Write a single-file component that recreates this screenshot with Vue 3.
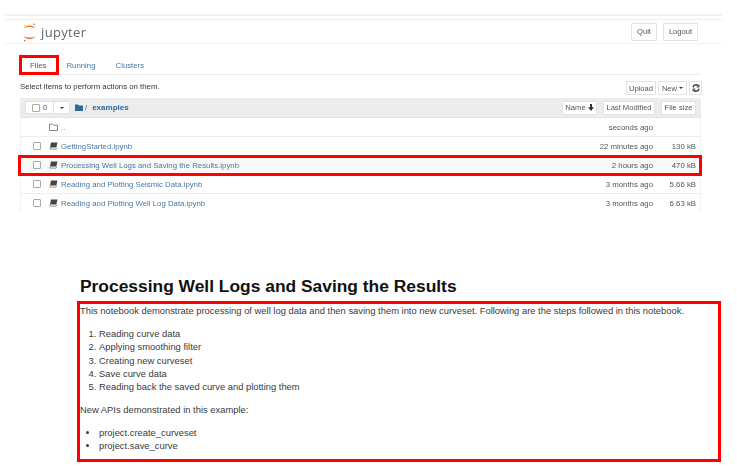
<script setup>
const rows = [
  { name: 'GettingStarted.ipynb', time: '22 minutes ago', size: '130 kB' },
  { name: 'Processing Well Logs and Saving the Results.ipynb', time: '2 hours ago', size: '470 kB', alt: true, marked: true },
  { name: 'Reading and Plotting Seismic Data.ipynb', time: '3 months ago', size: '5.66 kB' },
  { name: 'Reading and Plotting Well Log Data.ipynb', time: '3 months ago', size: '6.63 kB' },
]
const steps = ['Reading curve data', 'Applying smoothing filter', 'Creating new curveset', 'Save curve data', 'Reading back the saved curve and plotting them']
const apis = ['project.create_curveset', 'project.save_curve']
</script>

<template>
  <div class="page">
    <section class="browser">
      <div class="strip"></div>
      <header class="head">
        <div class="logo">
          <svg width="13" height="19" viewBox="0 0 13 19" class="logo-mark">
            <path d="M.5 5.6C2 1.4 11 1.4 12.5 5.6C10.5 3.6 2.5 3.6 .5 5.6Z" fill="#f37726" />
            <path d="M.5 13C2 17.2 11 17.2 12.5 13C10.5 15 2.5 15 .5 13Z" fill="#f37726" />
            <circle cx="11" cy="1.2" r=".8" fill="#767677" />
            <circle cx="1.6" cy="2.2" r=".5" fill="#9e9e9e" />
            <circle cx="1.6" cy="17.6" r=".8" fill="#767677" />
          </svg>
          <span class="wordmark">jupyter</span>
        </div>
        <div class="head-btns">
          <span class="btn quit">Quit</span>
          <span class="btn logout">Logout</span>
        </div>
      </header>

      <nav class="tabs">
        <span class="tab active marked-tab">Files</span>
        <span class="tab">Running</span>
        <span class="tab">Clusters</span>
      </nav>

      <div class="toolbar">
        <span>Select items to perform actions on them.</span>
        <div class="tool-btns">
          <span class="btn upload">Upload</span>
          <span class="btn new">New <i class="caret"></i></span>
          <span class="btn refresh">
            <svg width="8" height="8" viewBox="0 0 8 8" fill="none" stroke="#333" stroke-width="1.3">
              <path d="M1 3.4A3 3 0 0 1 6.4 2M7 4.6A3 3 0 0 1 1.6 6" />
              <path d="M7 .6V3H4.6M1 7.4V5H3.4" stroke-width=".9" />
            </svg>
          </span>
        </div>
      </div>

      <div class="list">
        <div class="list-head">
          <div class="select-group">
            <span class="sel-left"><i class="check"></i><span>0</span></span>
            <span class="sel-right"><i class="caret"></i></span>
          </div>
          <svg class="crumb-folder" width="8" height="7" viewBox="0 0 8 7"><path d="M0 1V.5h3l1 1h4V7H0z" fill="#2c6aa0" /></svg>
          <span class="crumb-sep">/</span>
          <span class="crumb">examples</span>
          <div class="sorts">
            <span class="btn s-name">Name
              <svg class="arrow" width="6" height="7" viewBox="0 0 6 7"><path d="M2 0h2v3.2h2L3 7 0 3.2h2z" fill="#333" /></svg>
            </span>
            <span class="btn s-mod">Last Modified</span>
            <span class="btn s-size">File size</span>
          </div>
        </div>

        <div class="row">
          <span class="cell-check"></span>
          <svg class="ico" width="9" height="8" viewBox="0 0 9 8" fill="none" stroke="#666" stroke-width=".8"><path d="M.5 1.2h3l1 1h4v5.3h-8z" /></svg>
          <span class="name">..</span>
          <span class="time">seconds ago</span>
          <span class="size"></span>
        </div>
        <div v-for="r in rows" :key="r.name" class="row" :class="{ alt: r.alt }">
          <span class="cell-check"><i class="check"></i></span>
          <svg class="ico" width="9" height="8" viewBox="0 0 9 8"><path d="M2 .5h6.4L7.4 5.6H1z" fill="#444" /><path d="M1 5.6v1.5h6.2l.6-1" fill="none" stroke="#666" stroke-width=".7" /></svg>
          <span class="name">{{ r.name }}</span>
          <span class="time">{{ r.time }}</span>
          <span class="size">{{ r.size }}</span>
        </div>
      </div>
    </section>
    <span class="row-mark"></span>
    <span class="tab-mark"></span>

    <section class="notebook">
      <h1>Processing Well Logs and Saving the Results</h1>
      <div class="cell">
        <p>This notebook demonstrate processing of well log data and then saving them into new curveset. Following are the steps followed in this notebook.</p>
        <ol>
          <li v-for="s in steps" :key="s">{{ s }}</li>
        </ol>
        <p>New APIs demonstrated in this example:</p>
        <ul>
          <li v-for="a in apis" :key="a">{{ a }}</li>
        </ul>
      </div>
    </section>
  </div>
</template>

<style>
html, body { margin: 0; background: #fff; }
</style>

<style scoped>
.page {
  position: relative;
  width: 737px;
  height: 469px;
  overflow: hidden;
  background: #fff;
  font-family: "Liberation Sans", Arial, sans-serif;
  color: #333;
}
.browser {
  height: 211px;
  overflow: hidden;
  padding-top: 14px;
  box-sizing: border-box;
  font-size: 7.8px;
  filter: blur(.3px);
}
.strip {
  margin-left: 5px;
  width: 717px;
  height: 2px;
  background: #f3f3f3;
  border-bottom: 1px solid #fff;
}
.head {
  margin: 2px 0 0 5px;
  width: 717px;
  height: 25px;
  box-sizing: border-box;
  border-top: 1px solid #eee;
  border-bottom: 1px solid #f3f3f3;
  display: flex;
  align-items: center;
  justify-content: space-between;
  padding: 0 24px 0 18px;
}
.logo { display: flex; align-items: center; gap: 5px; }
.logo-mark { display: block; margin-top: 1px; }
.wordmark {
  font-family: "Open Sans", sans-serif;
  font-size: 13px;
  letter-spacing: .35px;
  color: #666;
  line-height: 16px;
}
.head-btns { display: flex; gap: 6px; align-items: center; }
.btn {
  display: inline-flex;
  align-items: center;
  justify-content: center;
  gap: 2px;
  box-sizing: border-box;
  height: 14px;
  background: #fff;
  border: 1px solid #e2e2e2;
  border-radius: 1px;
  color: #555;
  font-size: 7.6px;
  white-space: nowrap;
}
.head-btns .btn { height: 18px; }
.quit { width: 26px; }
.logout { width: 35px; }

.tabs {
  margin: 12px 36px 0 20px;
  height: 18px;
  border-bottom: 1px solid #eee;
  display: flex;
}
.tab {
  color: #4a77a6;
  line-height: 20px;
  margin-left: 20px;
}
.tab.active { color: #555; margin-left: 10px; }

.tab-mark {
  position: absolute;
  left: 19px;
  top: 55px;
  width: 40px;
  height: 20px;
  box-sizing: border-box;
  border: 3px solid #f00;
}

.toolbar {
  margin: 0 35px 0 20px;
  height: 23px;
  display: flex;
  align-items: center;
  justify-content: space-between;
}
.toolbar > span { color: #333; }
.tool-btns { display: flex; gap: 2px; margin-top: 3px; }
.upload { width: 30px; }
.new { width: 29px; }
.refresh { width: 13px; }
.caret {
  display: inline-block;
  width: 0;
  height: 0;
  border: 2px solid transparent;
  border-top: 2.5px solid #333;
  border-bottom: 0;
}

.list { margin: 0 36px 0 20px; border-left: 1px solid #f2f2f2; border-right: 1px solid #f2f2f2; }
.list-head {
  height: 19.5px;
  margin-left: -1px;
  margin-right: -1px;
  background: #ececec;
  border-bottom: 1px solid #e4e4e4;
  box-sizing: border-box;
  display: flex;
  align-items: center;
  padding: 0 5px;
}
.select-group { display: flex; height: 13px; margin-top: 1px; }
.sel-left, .sel-right {
  display: flex;
  align-items: center;
  justify-content: center;
  box-sizing: border-box;
  background: #fff;
  border: 1px solid #e2e2e2;
  color: #555;
  font-size: 7.8px;
}
.sel-left { width: 29px; gap: 3px; }
.sel-right { width: 16px; border-left: 0; }
.check {
  display: block;
  box-sizing: border-box;
  width: 8px;
  height: 8px;
  border: 1px solid #aaa;
  border-radius: 1px;
  background: #fff;
}
.crumb-folder { margin-left: 5px; }
.crumb-sep { margin-left: 2px; color: #666; }
.crumb { margin-left: 5px; color: #2c6aa0; font-weight: bold; font-size: 8px; }
.sorts { margin-left: auto; display: flex; gap: 6px; margin-top: 1px; }
.s-name { width: 35px; }
.s-mod { width: 52px; }
.s-size { width: 35px; }
.arrow { display: block; }

.row {
  height: 19.1px;
  box-sizing: border-box;
  border-bottom: 1px solid #eee;
  display: flex;
  align-items: center;
  padding-top: 1px;
}
.row.alt { background: #f8f8f8; }
.cell-check {
  width: 28px;
  padding-left: 12px;
  box-sizing: border-box;
}
.ico { flex: none; }
.name { margin-left: 3px; color: #4a77a6; flex: 1; white-space: nowrap; }
.time { color: #555; }
.size { width: 47px; padding-right: 4px; box-sizing: border-box; text-align: right; color: #555; }
.row-mark {
  position: absolute;
  left: 18px;
  width: 684px;
  top: 155px;
  height: 21px;
  box-sizing: border-box;
  border: 3px solid #f00;
}

.notebook {
  margin: 0 16px 0 77px;
}
h1 {
  margin: 65px 0 0 3px;
  font-size: 17.4px;
  line-height: 21px;
  font-weight: bold;
  color: #111;
}
.cell {
  margin-top: 4px;
  height: 161px;
  box-sizing: border-box;
  border: 3px solid #f00;
  padding: 0;
  font-size: 9.4px;
  line-height: 13.4px;
  color: #3a3a3a;
}
p { margin: 0 0 9.4px; white-space: nowrap; }
ol, ul { margin: 0 0 9.4px; padding-left: 19px; }
</style>
